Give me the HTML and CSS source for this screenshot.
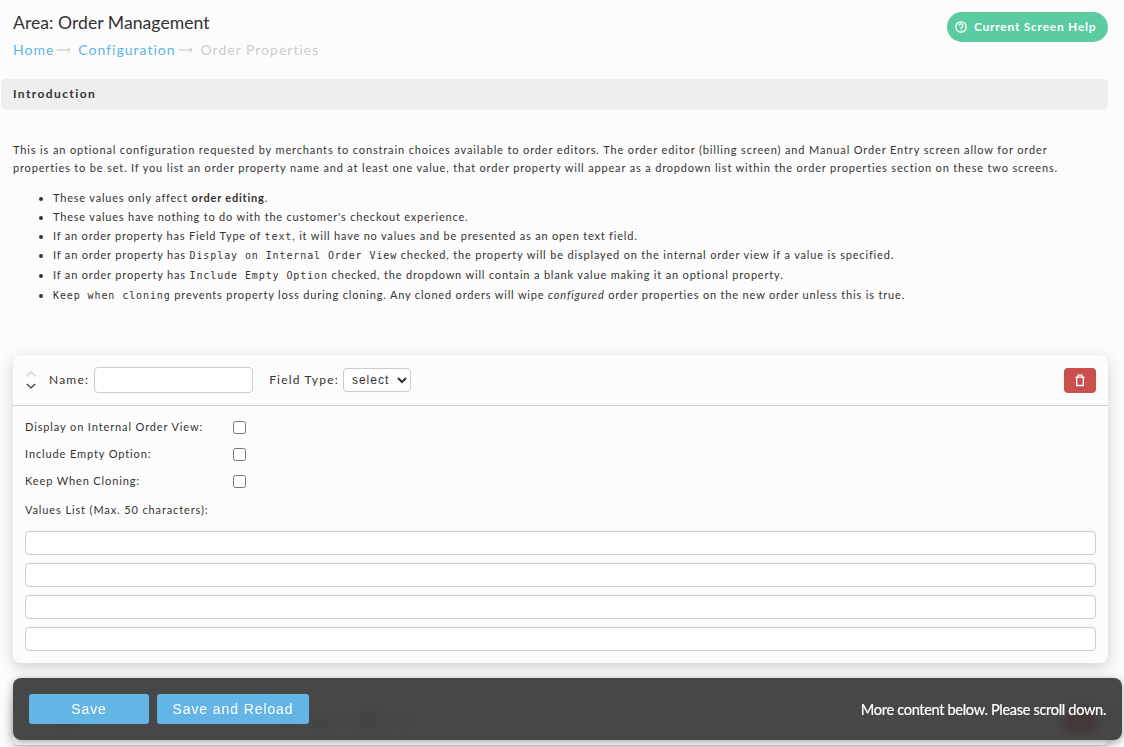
FILE: index.html
```
<!DOCTYPE html>
<html lang="en">
<head>
<meta charset="utf-8">
<title>Order Properties</title>
<link rel="stylesheet" href="styles.css">
</head>
<body>
<div class="page">
  <header class="page-header">
    <div>
      <h1>Area: Order Management</h1>
      <nav class="breadcrumb">
        <a href="#">Home</a>
        <svg class="arrow" viewBox="0 0 14 8"><path d="M0 4h13M10.500 1.500L13 4l-2.500 2.500"/></svg>
        <a href="#" class="second">Configuration</a>
        <svg class="arrow" viewBox="0 0 14 8"><path d="M0 4h13M10.500 1.500L13 4l-2.500 2.500"/></svg>
        <span>Order Properties</span>
      </nav>
    </div>
    <a href="#" class="help">
      <svg viewBox="0 0 12 12"><circle cx="6" cy="6" r="5.2"/><path d="M4.1 4.8a1.9 1.8 0 1 1 2.8 1.5Q6 6.8 6 7.5M6 8.4v1.1"/></svg>
      <span>Current Screen Help</span>
    </a>
  </header>

  <h2 class="section-title">Introduction</h2>

  <div class="intro">
    <p>This is an optional configuration requested by merchants to constrain choices available to order editors. The order editor (billing screen) and Manual Order Entry screen allow for order<br>properties to be set. If you list an order property name and at least one value, that order property will appear as a dropdown list within the order properties section on these two screens.</p>
    <ul>
      <li>These values only affect <b>order editing</b>.</li>
      <li>These values have nothing to do with the customer's checkout experience.</li>
      <li>If an order property has Field Type of <code>text</code>, it will have no values and be presented as an open text field.</li>
      <li class="wide">If an order property has <code>Display on Internal Order View</code> checked, the property will be displayed on the internal order view if a value is specified.</li>
      <li class="wide tall">If an order property has <code>Include Empty Option</code> checked, the dropdown will contain a blank value making it an optional property.</li>
      <li class="wide tall"><code>Keep when cloning</code> prevents property loss during cloning. Any cloned orders will wipe <i>configured</i> order properties on the new order unless this is true.</li>
    </ul>
  </div>

  <div class="card">
    <div class="card-header">
      <div class="sort">
        <svg class="off" viewBox="0 0 10 6"><path d="M.8 5L5 1l4.200 4"/></svg>
        <svg viewBox="0 0 10 6"><path d="M.8 1L5 5l4.200-4"/></svg>
      </div>
      <label class="name"><span>Name:</span><input type="text"></label>
      <label class="type"><span>Field Type:</span><select><option>select</option><option>text</option></select></label>
      <button class="delete" aria-label="Delete"><svg viewBox="0 0 10 13"><path d="M.5 3.200h9M3.200 3V1.200h3.600V3M1.700 3.400v8.100h6.600V3.400"/></svg></button>
    </div>
    <div class="card-body">
      <label class="check"><span>Display on Internal Order View:</span><input type="checkbox"></label>
      <label class="check"><span>Include Empty Option:</span><input type="checkbox"></label>
      <label class="check"><span>Keep When Cloning:</span><input type="checkbox"></label>
      <div class="list-label">Values List (Max. 50 characters):</div>
      <div class="values">
        <input type="text">
        <input type="text">
        <input type="text">
        <input type="text">
      </div>
    </div>
  </div>

  <div class="card">
    <div class="card-header">
      <div class="sort">
        <svg viewBox="0 0 10 6"><path d="M.8 5L5 1l4.200 4"/></svg>
        <svg class="off" viewBox="0 0 10 6"><path d="M.8 1L5 5l4.200-4"/></svg>
      </div>
      <label class="name"><span>Name:</span><input type="text"></label>
      <label class="type"><span>Field Type:</span><select><option>select</option><option>text</option></select></label>
      <button class="delete" aria-label="Delete"><svg viewBox="0 0 10 13"><path d="M.5 3.200h9M3.200 3V1.200h3.600V3M1.700 3.400v8.100h6.600V3.400"/></svg></button>
    </div>
  </div>
</div>

<div class="save-bar">
  <button class="save">Save</button>
  <button>Save and Reload</button>
  <span class="more">More content below. Please scroll down.</span>
</div>
</body>
</html>
```
FILE: styles.css
```
* {
  box-sizing: border-box;
}

body {
  margin: 0;
  height: 747px;
  overflow: hidden;
  background: #fcfcfc;
  color: #333;
  font-family: Lato, "Liberation Sans", sans-serif;
  font-size: 11px;
  letter-spacing: 0.8px;
}

a {
  color: #61b4e4;
  text-decoration: none;
}

svg {
  display: block;
  fill: none;
  stroke: currentColor;
}

.page {
  height: 747px;
  overflow: hidden;
  padding: 12px 16px 0 13px;
}

.page-header {
  display: flex;
  justify-content: space-between;
  align-items: flex-start;
  height: 67px;
}

h1 {
  margin: 0;
  font-size: 17.6px;
  font-weight: 400;
  line-height: 22px;
  letter-spacing: 0.03px;
}

.breadcrumb {
  display: flex;
  align-items: center;
  margin-top: 6px;
  font-size: 14px;
  line-height: 20px;
  letter-spacing: 1px;
  color: #ccc;
}

.arrow {
  width: 14px;
  height: 8px;
  margin: 0 7px 0 3px;
  stroke: #bbb;
  stroke-width: 0.9;
}

.second + .arrow {
  margin-right: 8px;
}

.help {
  display: flex;
  align-items: center;
  width: 161px;
  height: 30px;
  padding-left: 8px;
  border-radius: 15px;
  background: #5acca0;
  color: #fff;
  font-size: 12px;
  font-weight: 700;
  letter-spacing: 0.74px;
}

.help svg {
  width: 12px;
  height: 12px;
  margin-right: 7px;
  stroke-width: 1.3;
}

.help span {
  padding-bottom: 1px;
}

.section-title {
  height: 31px;
  margin: 0 0 0 -12px;
  padding-left: 12px;
  border-radius: 5px;
  background: #eee;
  font-size: 12px;
  line-height: 30px;
  letter-spacing: 1.4px;
}

.intro {
  height: 245px;
  padding-top: 31px;
}

.intro p {
  margin: 0;
  line-height: 18px;
  letter-spacing: 0.833px;
  white-space: nowrap;
}

.intro p::first-line {
  letter-spacing: 0.865px;
}

.intro ul {
  margin: 11px 0 0;
  padding-left: 40px;
}

.intro li {
  height: 19px;
  line-height: 19px;
}

.intro .tall {
  height: 20px;
  line-height: 21px;
}

.intro .wide {
  letter-spacing: 0.825px;
}

code {
  font-family: "DejaVu Sans Mono", monospace;
  font-size: 10px;
  line-height: 1;
  letter-spacing: 0.9px;
}

.card {
  margin-bottom: 32px;
  border-radius: 8px;
  background: #fcfcfc;
  box-shadow: 0 4px 15px rgba(0, 0, 0, 0.18);
}

.card-header {
  display: flex;
  align-items: center;
  height: 51px;
  padding: 0 12px 0 13px;
  border-bottom: 1px solid #ccc;
  font-size: 12px;
  letter-spacing: 1.2px;
}

.card-header label {
  display: flex;
  align-items: center;
}

.card-header label span {
  padding-bottom: 2px;
}

input[type=text] {
  border: 1px solid #ccc;
  border-radius: 4px;
  background: #fff;
}

.sort {
  width: 10px;
  margin-right: 13px;
}

.sort svg {
  width: 10px;
  height: 6px;
  margin-bottom: 6px;
  stroke-width: 1.1;
}

.sort svg:last-child {
  margin-bottom: 0;
}

.sort .off {
  stroke: #ccc;
}

.name input {
  width: 159px;
  height: 26px;
  margin-left: 5px;
}

.type {
  margin-left: 16px;
}

.type select {
  width: 68px;
  height: 24px;
  margin-left: 4px;
  padding: 0 0 1px 4px;
  border: 1px solid #ccc;
  border-radius: 4px;
  background: #fff;
  color: #333;
  font-family: "Liberation Sans", sans-serif;
  font-size: 12px;
  letter-spacing: 1px;
}

.delete {
  display: flex;
  align-items: center;
  justify-content: center;
  width: 32px;
  height: 25px;
  margin-left: auto;
  padding: 0;
  border: 0;
  border-radius: 4px;
  background: #cb504d;
  color: #fff;
}

.delete svg {
  width: 10px;
  height: 13px;
  stroke-width: 1.3;
}

.card-body {
  padding: 8px 12px 12px;
}

.check {
  display: flex;
  align-items: center;
  height: 27px;
  letter-spacing: 0.88px;
}

.check span {
  width: 208px;
  padding-bottom: 2px;
}

.check input {
  width: 13px;
  height: 13px;
  margin: 0;
}

.list-label {
  height: 36px;
  line-height: 29px;
  letter-spacing: 0.88px;
}

.values {
  display: flex;
  flex-direction: column;
  gap: 8px;
}

.values input {
  width: 100%;
  height: 24px;
}

.save-bar {
  position: absolute;
  left: 13px;
  top: 678px;
  display: flex;
  align-items: center;
  gap: 8px;
  width: 1109px;
  height: 62px;
  padding: 0 16px;
  border-radius: 8px;
  background: rgba(51, 51, 51, 0.9);
  box-shadow: 0 2px 8px rgba(0, 0, 0, 0.35);
  backdrop-filter: blur(5px);
}

.save-bar button {
  width: 152px;
  height: 30px;
  padding: 0;
  border: 0;
  border-radius: 3px;
  background: #62b5e5;
  color: #fff;
  font-family: "Liberation Sans", sans-serif;
  font-size: 14px;
  letter-spacing: 0.9px;
}

.save-bar .save {
  width: 120px;
}

.more {
  margin-left: auto;
  color: #fff;
  font-size: 14.6px;
  letter-spacing: -0.34px;
  -webkit-text-stroke: 0.2px #fff;
}
```
